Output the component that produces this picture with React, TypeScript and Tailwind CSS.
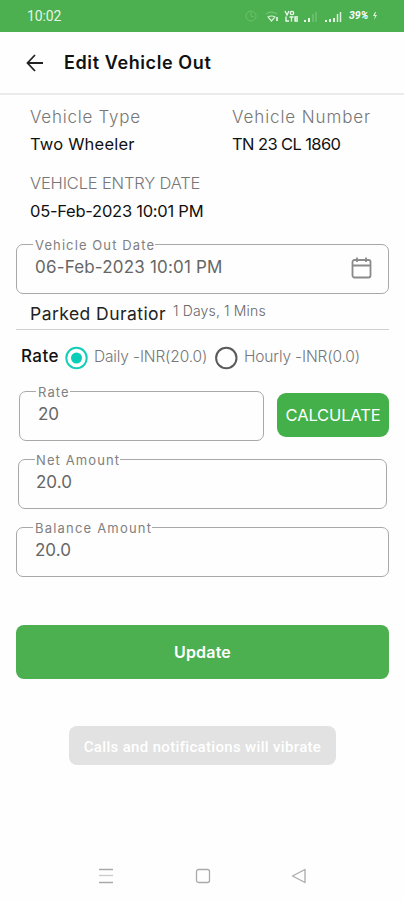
import type { ReactNode } from 'react';

type FieldProps = {
  label: string;
  value: string;
  className?: string;
  labelClass?: string;
  valueClass?: string;
  children?: ReactNode;
};

function Field({ label, value, className = '', labelClass = '', valueClass = '', children }: FieldProps) {
  return (
    <fieldset className={`h-[57px] rounded-[7px] border border-[#a8a8a8] ${className}`}>
      <legend className="ml-[16px] h-[14px] pl-[2px] text-[13px] leading-[14px] text-[#808080]">
        <span className={`block translate-y-px whitespace-nowrap ${labelClass}`}>{label}</span>
      </legend>
      <div className="flex items-start justify-between pl-[18px] pr-[16px] pt-[4px]">
        <span className={`text-[17px] leading-[24px] text-[#666] ${valueClass}`}>{value}</span>
        {children}
      </div>
    </fieldset>
  );
}

function StatusIcons() {
  return (
    <svg width="92" height="20" viewBox="0 0 92 20" fill="none" className="block">
      <g stroke="#82cc83" strokeWidth="1" opacity="0.6">
        <circle cx="7" cy="10" r="5" />
        <path d="M7 6v4l3 1" />
      </g>
      <path d="M22 8q5-4 11 0" stroke="#82cc83" />
      <path d="M24 11q3.500-2 7 0l-3.500 4z" stroke="#d9f2d9" strokeWidth="1.200" />
      <path d="M33 11v4" stroke="#d9f2d9" strokeWidth="1.800" />
      <g stroke="#f0fbf0" strokeWidth="1.300">
        <path d="m41 5 2 4 2-4" />
        <circle cx="48" cy="7" r="1.700" />
        <path d="M42 10.500v4.500h3M45.500 11h4M47.500 11v4.500M54 11h-3v4h3M51 13h3" />
      </g>
      <path d="M61 16v-2m4 2v-4" stroke="#e6f7e6" strokeWidth="2" />
      <path d="M69 16V8m3 8V6" stroke="#70c071" strokeWidth="1.500" />
      <path d="M82 16v-2m4 2v-3m4 3v-4" stroke="#e6f7e6" strokeWidth="2" />
    </svg>
  );
}

export default function App() {
  return (
    <div className="flex h-[900px] w-[404px] flex-col overflow-hidden bg-[#fefefe] font-['Inter',sans-serif]">
      <div className="flex h-[32px] shrink-0 items-center bg-[#4caf50] pl-[27px] text-white">
        <span className="w-[217px] font-['Roboto',sans-serif] text-[14px] leading-[20px] tracking-[-0.1px] text-[#e4f6e4]">10:02</span>
        <StatusIcons />
        <svg width="8" height="20" viewBox="0 0 8 20" fill="none">
          <path d="M1.500 16V8M4.500 16V6" stroke="#d9f2d9" strokeWidth="1.500" />
        </svg>
        <span className="ml-[5px] font-['Roboto',sans-serif] text-[10.5px] font-bold italic leading-[20px]">39%</span>
        <svg width="6" height="10" viewBox="0 0 6 10" className="ml-[4px]">
          <path d="M3 1 1 5h2L2 9l3-5H3l1-3z" fill="#d9f2d9" />
        </svg>
      </div>

      <header className="flex h-[63px] shrink-0 items-center border-b-2 border-[#ebebeb] pl-[26px]">
        <svg width="18" height="18" viewBox="0 0 18 18" fill="none" stroke="#222" strokeWidth="1.800">
          <path d="M17 9H2M9 1 1.500 9 9 17" />
        </svg>
        <h1 className="ml-[20px] text-[18px] font-semibold leading-[24px] tracking-[0.6px] text-[#111]">Edit Vehicle Out</h1>
      </header>

      <section className="flex shrink-0 flex-col pl-[30px] pt-[9px] leading-[27px]">
        <div className="grid grid-cols-[202px_1fr]">
          <span className="text-[17px] font-light tracking-[0.75px] text-[#777]">Vehicle Type</span>
          <span className="text-[17px] font-light tracking-[0.9px] text-[#777]">Vehicle Number</span>
        </div>
        <div className="grid grid-cols-[202px_1fr] text-[16.5px] text-[#111]">
          <span className="tracking-[0.2px]">Two Wheeler</span>
          <span className="tracking-[-0.6px]">TN 23 CL 1860</span>
        </div>
        <span className="mt-[12px] text-[16.5px] font-light tracking-[-0.17px] text-[#777]">VEHICLE ENTRY DATE</span>
        <span className="mt-px text-[16.5px] tracking-[-0.25px] text-[#111]">05-Feb-2023 10:01 PM</span>
      </section>

      <main className="flex flex-col pl-[16px] pt-[12px]">
        <Field label="Vehicle Out Date" value="06-Feb-2023 10:01 PM" className="w-[373px]" labelClass="tracking-[1.1px]" valueClass="tracking-[0.18px]">
          <svg width="21" height="22" viewBox="0 0 21 22" className="mt-[2px]" fill="none" stroke="#8a8a8a" strokeWidth="1.800">
            <rect x="1.500" y="3" width="18" height="17.500" rx="2" />
            <path d="M2 8.500h17M6 .5V5M15 .5V5" />
          </svg>
        </Field>

        <div className="mt-[5px] flex h-[31px] w-[373px] border-b border-[#d0d0d0] pl-[14px]">
          <span className="w-[143px] whitespace-nowrap text-[17.5px] leading-[29px] tracking-[0.45px] text-[#222]">Parked Duratior</span>
          <span className="whitespace-nowrap text-[14px] font-light leading-[24px] tracking-[0.15px] text-[#666]">1 Days, 1 Mins</span>
        </div>

        <div className="flex h-[54px] items-center pl-[5px] text-[15.5px] font-light tracking-[-0.15px] text-[#777]">
          <span className="w-[43px] text-[17px] font-medium tracking-[0.4px] text-[#111]">Rate</span>
          <svg width="24" height="24" viewBox="0 0 24 24" fill="none" className="mt-[2px]">
            <circle cx="12.500" cy="12" r="10.200" stroke="#16cdb9" strokeWidth="2" />
            <circle cx="12.500" cy="12" r="5.500" fill="#08cdb7" />
          </svg>
          <span className="ml-[6px] w-[120px] whitespace-nowrap">Daily -INR(20.0)</span>
          <svg width="24" height="24" viewBox="0 0 24 24" fill="none" className="mt-[2px]">
            <circle cx="12.300" cy="12" r="10.200" stroke="#5a5a5a" strokeWidth="2" />
          </svg>
          <span className="ml-[6px] whitespace-nowrap">Hourly -INR(0.0)</span>
        </div>

        <div className="flex">
          <Field label="Rate" value="20" className="ml-[3px] w-[245px]" labelClass="tracking-[1.1px]" />
          <button className="ml-[13px] mt-[9px] h-[44px] w-[112px] rounded-[9px] bg-[#43b049] text-[16.5px] font-normal tracking-[-0.15px] text-white">CALCULATE</button>
        </div>
        <Field label="Net Amount" value="20.0" className="ml-[2px] mt-[11px] w-[369px]" labelClass="-ml-px tracking-[1.1px]" valueClass="-ml-px" />
        <Field label="Balance Amount" value="20.0" className="mt-[11px] w-[373px]" labelClass="tracking-[1.2px]" />

        <button className="mt-[48px] h-[54px] w-[373px] rounded-[8px] bg-[#4caf50] text-[16px] font-semibold tracking-[0.2px] text-white">Update</button>
        <div className="ml-[53px] mt-[47px] flex h-[39px] w-[267px] items-center justify-center rounded-[8px] bg-[#e2e2e2] pt-[3px] font-['Roboto',sans-serif] text-[15px] font-medium tracking-[0.33px] text-white">
          <span className="whitespace-nowrap">Calls and notifications will vibrate</span>
        </div>
      </main>

      <nav className="mt-auto flex h-[48px] items-center justify-between pl-[98px] pr-[97px] text-[#aaa]">
        <svg width="16" height="16" viewBox="0 0 16 16" stroke="currentColor" strokeWidth="1.300">
          <path d="M1 1.500h14M1 14.500h14" />
          <path d="M1 7.500h14" opacity=".6" />
        </svg>
        <svg width="16" height="16" viewBox="0 0 16 16" fill="none" stroke="currentColor" strokeWidth="1.300">
          <rect x="1.500" y="1.500" width="13" height="13" rx="2" />
        </svg>
        <svg width="16" height="16" viewBox="0 0 16 16" fill="none" stroke="currentColor" strokeWidth="1.300" strokeLinejoin="round">
          <path d="M1.500 8 14 1.500v13z" />
        </svg>
      </nav>
    </div>
  );
}
